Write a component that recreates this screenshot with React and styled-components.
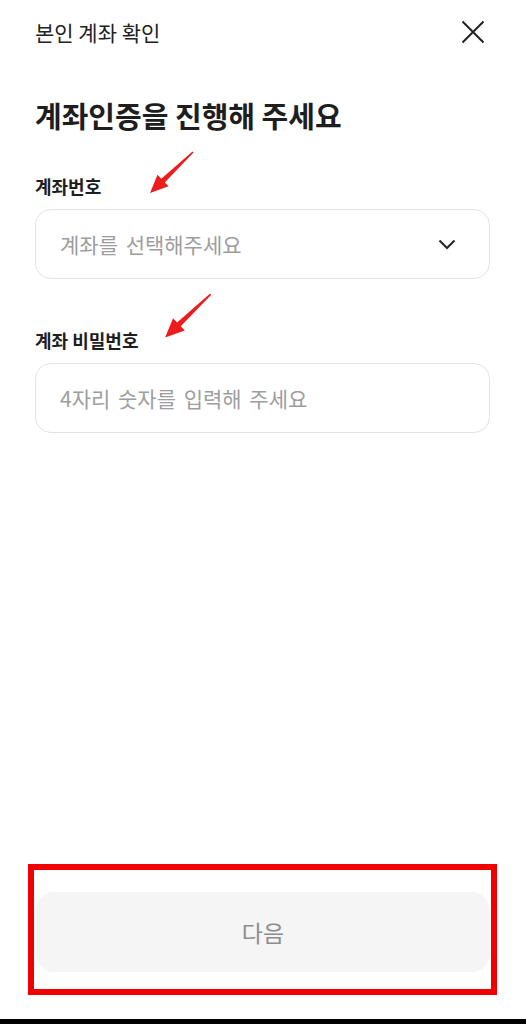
import React from "react";
import styled, { createGlobalStyle } from "styled-components";

const GlobalStyle = createGlobalStyle`
  * {
    box-sizing: border-box;
  }
  body {
    margin: 0;
    background: #ffffff;
    font-family: "Noto Sans CJK KR", "Noto Sans", sans-serif;
    color: #222222;
  }
`;

const Page = styled.div`
  position: relative;
  min-height: 100vh;
  display: flex;
  flex-direction: column;
  background: #ffffff;
`;

const Header = styled.header`
  height: 64px;
  padding: 0 41px 0 35px;
  display: flex;
  align-items: center;
  justify-content: space-between;
`;

const HeaderTitle = styled.span`
  font-size: 21px;
  font-weight: 400;
  color: #222222;
`;

const CloseButton = styled.button`
  width: 24px;
  height: 24px;
  padding: 0;
  border: none;
  background: none;
  display: flex;
  align-items: center;
  justify-content: center;
`;

const Main = styled.main`
  padding: 0 36px 0 35px;
  display: flex;
  flex-direction: column;
`;

const Title = styled.h1`
  margin: 33px 0 0;
  font-size: 29px;
  line-height: 36px;
  font-weight: 700;
  color: #1e1e1e;
`;

const Field = styled.div`
  margin-top: ${(p) => p.gap}px;
  display: flex;
  flex-direction: column;
`;

const Label = styled.label`
  font-size: 18px;
  line-height: 24px;
  font-weight: 700;
  color: #1e1e1e;
  margin-bottom: 11px;
`;

const Box = styled.div`
  height: 70px;
  border: 1px solid #e4e4e4;
  border-radius: 16px;
  padding: 0 33px 0 24px;
  display: flex;
  align-items: center;
  justify-content: space-between;
`;

const Placeholder = styled.span`
  font-size: 21px;
  word-spacing: 3px;
  color: #9d9d9d;
`;

const Footer = styled.footer`
  margin-top: auto;
  padding: 0 29px 24px 28px;
`;

const Highlight = styled.div`
  border: 6px solid #f20000;
  padding: 22px 1px 17px 2px;
`;

const NextButton = styled.button`
  width: 100%;
  height: 80px;
  border: none;
  border-radius: 18px;
  background: #f5f5f5;
  font-family: "Noto Sans CJK KR", "Noto Sans", sans-serif;
  font-size: 23px;
  color: #8c8c8c;
`;

const BottomBar = styled.div`
  height: 5px;
  background: #000000;
`;

const Arrow = styled.svg`
  position: absolute;
  left: ${(p) => p.x}px;
  top: ${(p) => p.y}px;
`;

const RedArrow = ({ x, y, scale = 1 }) => (
  <Arrow x={x} y={y} width={50 * scale} height={48 * scale} viewBox="0 0 50 48">
    <polygon
      points="44.48,1.46 45.52,2.54 16.76,32.39 20.55,36.37 2,43 9.51,24.79 13.3,28.77"
      fill="#ee1c1c"
    />
  </Arrow>
);

const App = () => {
  return (
    <Page>
      <GlobalStyle />
      <Header>
        <HeaderTitle>본인 계좌 확인</HeaderTitle>
        <CloseButton aria-label="닫기">
          <svg width="24" height="24" viewBox="0 0 24 24">
            <path d="M1.5 1.5 L22.5 22.5 M22.5 1.5 L1.5 22.5" stroke="#222" strokeWidth="2" fill="none" />
          </svg>
        </CloseButton>
      </Header>
      <Main>
        <Title>계좌인증을 진행해 주세요</Title>
        <Field gap={41}>
          <Label>계좌번호</Label>
          <Box>
            <Placeholder>계좌를 선택해주세요</Placeholder>
            <svg width="18" height="11" viewBox="0 0 18 11">
              <path d="M1.5 1.5 L9 9 L16.5 1.5" stroke="#2a2a2a" strokeWidth="2.2" fill="none" />
            </svg>
          </Box>
        </Field>
        <Field gap={49}>
          <Label>계좌 비밀번호</Label>
          <Box>
            <Placeholder>4자리 숫자를 입력해 주세요</Placeholder>
          </Box>
        </Field>
      </Main>
      <Footer>
        <Highlight>
          <NextButton>다음</NextButton>
        </Highlight>
      </Footer>
      <BottomBar />
      <RedArrow x={148} y={150} />
      <RedArrow x={163} y={292} scale={1.06} />
    </Page>
  );
};

export default App;
